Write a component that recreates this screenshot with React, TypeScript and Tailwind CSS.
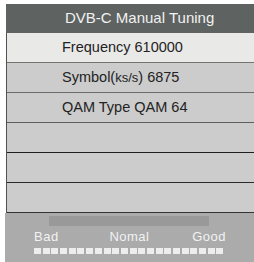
import React from "react";

const rows: { content: React.ReactNode; bg: string; border: string }[] = [
  { content: "Frequency 610000", bg: "bg-[#e9e9e8]", border: "border-[#727472]" },
  {
    content: (
      <>
        Symbol(<span className="text-[13px]">ks/s</span>) 6875
      </>
    ),
    bg: "bg-[#cbcccb]",
    border: "border-[#6a6c6a]",
  },
  { content: "QAM Type QAM 64", bg: "bg-[#cbcccb]", border: "border-[#5e605e]" },
  { content: "", bg: "bg-[#cbcccb]", border: "border-[#1e1e1e]" },
  { content: "", bg: "bg-[#cbcccb]", border: "border-[#2a2a2a]" },
  { content: "", bg: "bg-[#cbcccb]", border: "border-[#333533]" },
];

export default function App() {
  return (
    <div
      className="w-[254px] h-[262px] bg-white pt-[4px] pl-[6px] overflow-hidden"
      style={{ fontFamily: '"Liberation Sans", Arial, sans-serif' }}
    >
      <div className="flex flex-col w-[248px]">
        <div className="h-[29px] bg-[#5e6361] text-[#f1f1f1] text-[15px] flex items-center pl-[59px]">
          DVB-C Manual Tuning
        </div>
        <div className="flex flex-col border-l-[1.5px] border-[#505250]">
          {rows.map((r, i) => (
            <div
              key={i}
              className={`h-[30px] ${r.bg} border-b-[1.5px] ${r.border} flex items-center pl-[55px] text-[14.5px] text-[#232323]`}
            >
              {r.content}
            </div>
          ))}
        </div>
      </div>
      <div className="-ml-[1px] w-[249px] h-[49px] bg-[#ababab] flex flex-col">
        <div className="mt-[3px] ml-[44px] w-[160px] h-[10px] bg-[#999999]" />
        <div className="mt-[4px] ml-[29px] w-[192px] flex justify-between text-[13px] leading-[13px] text-[#f2f2f2] tracking-[0.5px]">
          <span>Bad</span>
          <span className="ml-[8px]">Nomal</span>
          <span>Good</span>
        </div>
        <div className="mt-[5px] ml-[29px] flex gap-[1.7px]">
          {Array.from({ length: 22 }).map((_, i) => (
            <div key={i} className="w-[7px] h-[6px] bg-[#ededed]" />
          ))}
        </div>
      </div>
    </div>
  );
}
